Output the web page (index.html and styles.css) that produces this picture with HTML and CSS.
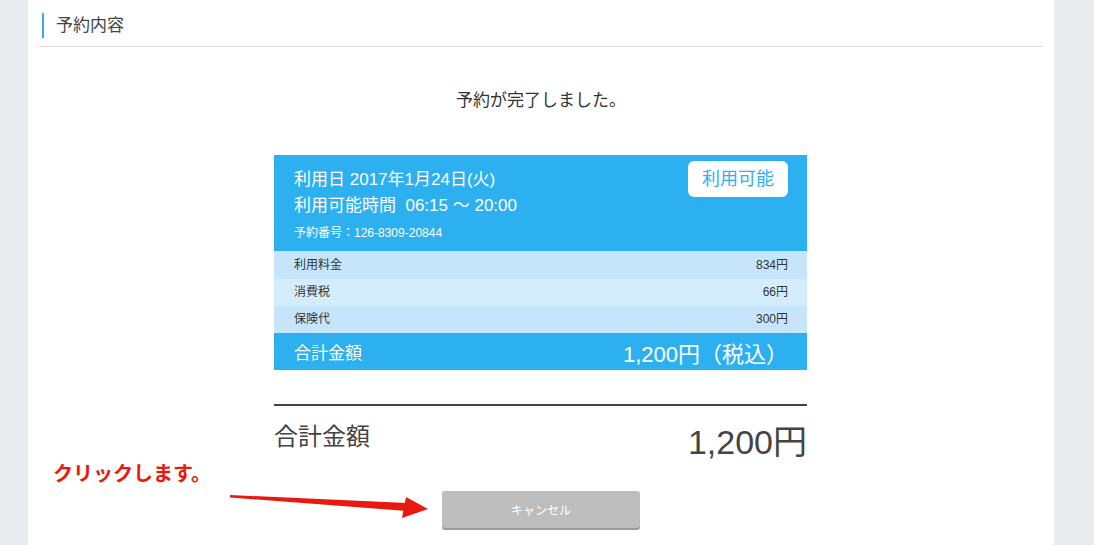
FILE: index.html
```html
<!DOCTYPE html>
<html lang="ja">
<head>
    <meta charset="UTF-8">
    <meta name="viewport" content="width=device-width, initial-scale=1.0">
    <title>予約内容</title>
    <link rel="stylesheet" href="styles.css">
</head>
<body>
    <div class="panel">
        <div class="section-head">
            <h2 class="section-title">予約内容</h2>
        </div>

        <p class="message">予約が完了しました。</p>

        <div class="card">
            <div class="card-top">
                <div class="card-info">
                    <div class="info-line">利用日 2017年1月24日(火)</div>
                    <div class="info-line">利用可能時間&nbsp; 06:15 〜 20:00</div>
                    <div class="info-small">予約番号：126-8309-20844</div>
                </div>
                <span class="badge">利用可能</span>
            </div>
            <div class="fee-row first"><span>利用料金</span><span>834円</span></div>
            <div class="fee-row alt"><span>消費税</span><span>66円</span></div>
            <div class="fee-row"><span>保険代</span><span>300円</span></div>
            <div class="card-total"><span>合計金額</span><span class="card-total-amount">1,200円（税込）</span></div>
        </div>

        <div class="summary">
            <span class="summary-label">合計金額</span>
            <span class="summary-amount">1,200円</span>
        </div>

        <div class="actions">
            <button class="cancel-btn">キャンセル</button>
        </div>

        <!-- annotation -->
        <div class="note">クリックします。</div>
        <svg class="arrow" width="232" height="34" viewBox="0 0 232 34">
            <polygon points="2,7 179,15 179,23 2,9.5" fill="#e8190f"/>
            <polygon points="178,9 200,21 174,30" fill="#e8190f"/>
        </svg>
    </div>
</body>
</html>
```

FILE: styles.css
```css
body { margin: 0; background: #e9ecef; font-family: "Liberation Sans", "Noto Sans CJK JP", sans-serif; color: #333; }
.panel { position: relative; box-sizing: border-box; width: 1026px; min-height: 545px; margin-left: 28px; padding: 13px 11px 20px; background: #fff; }

.section-head { padding: 0 0 8px 3px; border-bottom: 1px solid #ddd; }
.section-title { margin: 0; padding-left: 12px; border-left: 2px solid #2db0f0; font-size: 17px; font-weight: normal; line-height: 25px; color: #444; }

.message { margin: 42px 0 0; text-align: center; font-size: 17px; line-height: 24px; }

.card { width: 533px; margin: 42px 0 0 235px; background: #2db0f0; color: #fff; }
.card-top { display: flex; justify-content: space-between; align-items: flex-start; padding: 6px 19px 9px 20px; }
.card-info { padding-top: 6px; }
.info-line { font-size: 17px; line-height: 26px; }
.info-small { margin-top: 5px; font-size: 12px; line-height: 18px; }
.badge { box-sizing: border-box; width: 100px; height: 36px; border-radius: 6px; background: #fff; color: #2db0f0; font-size: 18px; line-height: 36px; text-align: center; }

.fee-row { display: flex; justify-content: space-between; padding: 0 19px 0 20px; height: 27px; line-height: 27px; font-size: 12px; color: #333; background: #c6e5fb; }
.fee-row.first { height: 28px; line-height: 28px; }
.fee-row.alt { background: #d4edfd; }

.card-total { display: flex; justify-content: space-between; align-items: center; height: 37px; padding: 0 19px 0 20px; font-size: 17px; }
.card-total-amount { font-size: 22px; }

.summary { display: flex; justify-content: space-between; align-items: flex-start; width: 533px; margin: 34px 0 0 235px; padding-top: 14px; border-top: 2px solid #444; color: #444; }
.summary-label { font-size: 24px; line-height: 34px; }
.summary-amount { font-size: 34px; line-height: 44px; }

.actions { margin-top: 27px; text-align: center; }
.cancel-btn { width: 198px; height: 37px; border: none; border-radius: 3px; background: #bdbdbd; box-shadow: 0 2px 0 #9a9a9a; color: #fff; font-family: inherit; font-size: 12px; }

.note { position: absolute; left: 25px; top: 461px; font-size: 20px; font-weight: bold; color: #e8190f; line-height: 26px; }
.arrow { position: absolute; left: 200px; top: 488px; }
```
